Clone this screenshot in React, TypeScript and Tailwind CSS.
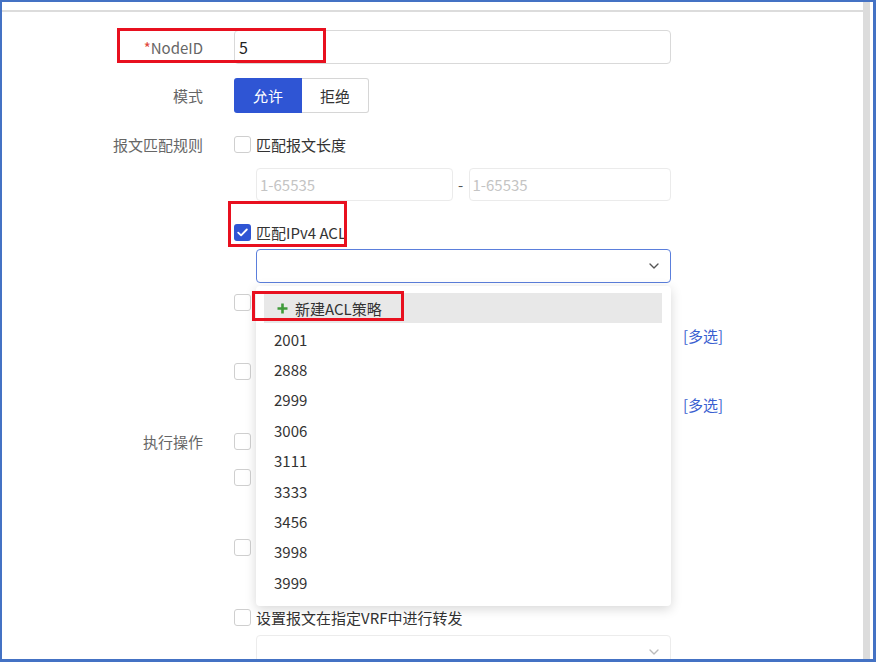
import { ChevronDown } from 'lucide-react'
import type { ReactNode } from 'react'

const aclList = ['2001', '2888', '2999', '3006', '3111', '3333', '3456', '3998', '3999']

function Checkbox({ checked = false }: { checked?: boolean }) {
  if (checked) {
    return (
      <span className="flex h-[17px] w-[17px] shrink-0 items-center justify-center rounded-[3px] bg-[#2f55d4]">
        <svg width="11" height="9" viewBox="0 0 11 9" fill="none">
          <path d="M1.2 4.6 4.1 7.4 9.8 1.5" stroke="#fff" strokeWidth="1.8" strokeLinecap="round" strokeLinejoin="round" />
        </svg>
      </span>
    )
  }
  return <span className="h-[17px] w-[17px] shrink-0 rounded-[3px] border border-[#cfcfcf] bg-white" />
}

function Row({ label, className, children }: { label?: ReactNode; className: string; children: ReactNode }) {
  return (
    <div className={'flex items-center ' + className}>
      <div className="w-[201px] shrink-0 text-right text-[#666]">{label}</div>
      <div className="ml-[31px] flex h-full w-[437px] shrink-0 items-center">{children}</div>
    </div>
  )
}

// rows that sit under the open dropdown only show their checkbox
function CheckRow({ label, text, checked, className }: { label?: string; text?: string; checked?: boolean; className: string }) {
  return (
    <Row label={label} className={'h-[24px] ' + className}>
      <Checkbox checked={checked} />
      {text && <span className="ml-[5px] whitespace-nowrap text-[#333]">{text}</span>}
    </Row>
  )
}

function SelectBox({ active, muted }: { active?: boolean; muted?: boolean }) {
  return (
    <div
      className={
        'ml-[22px] flex h-full w-[415px] shrink-0 items-center justify-end rounded-[4px] border bg-white pr-[8px] ' +
        (active ? 'border-[#5b7fdc]' : muted ? 'border-[#ececec]' : 'border-[#d9d9d9]')
      }
    >
      <ChevronDown size={16} strokeWidth={2} className={muted ? 'text-[#bbb]' : 'text-[#555]'} />
    </div>
  )
}

function AclDropdown() {
  return (
    <div className="absolute left-[22px] top-[37px] z-10 h-[320px] w-[415px] rounded-[4px] bg-white pt-[7px] shadow-[0_3px_12px_rgba(0,0,0,0.16)]">
      <div className="ml-[8px] mr-[9px] flex h-[30px] items-center bg-[#e8e8e8] pl-[13px] text-[#333]">
        <svg width="11" height="11" viewBox="0 0 11 11" className="mr-[7px]">
          <path d="M5.5 0.5v10M0.5 5.5h10" stroke="#3f9a3a" strokeWidth="2.6" />
        </svg>
        新建ACL策略
      </div>
      <ul className="mt-[1px]">
        {aclList.map((acl) => (
          <li key={acl} className="flex h-[30.4px] items-center pl-[18px] text-[#333]">
            {acl}
          </li>
        ))}
      </ul>
    </div>
  )
}

export default function App() {
  return (
    <div className="relative h-[662px] w-[876px] overflow-hidden border-b-[3px] border-l-2 border-r-[3px] border-t-2 border-[#4472c4] bg-white font-['Noto_Sans_CJK_SC',sans-serif] text-[15px] leading-none">
      <div className="flex h-full">
        <div className="min-w-0 flex-1">
          <div className="h-[8px]" />
          <div className="h-[2px] bg-[#dcdcdc]" />

          <div className="pt-[18px]">
            <Row
              className="h-[34px]"
              label={
                <>
                  <span className="text-[#e0473b]">*</span>NodeID
                </>
              }
            >
              <div className="flex h-full w-full items-center rounded-[4px] border border-[#d9d9d9] pl-[4px] text-[16px] text-[#222]">
                5
              </div>
            </Row>

            <Row label="模式" className="mt-[14px] h-[35px]">
              <button className="h-full w-[68px] rounded-l-[3px] bg-[#2f55d4] text-white">允许</button>
              <button className="h-full w-[67px] rounded-r-[3px] border border-l-0 border-[#d6d6d6] bg-white text-[#333]">拒绝</button>
            </Row>

            <CheckRow label="报文匹配规则" text="匹配报文长度" className="mt-[19px]" />

            <Row className="mt-[12px] h-[33px]">
              <div className="ml-[22px] flex h-full w-[197px] items-center rounded-[4px] border border-[#ebebeb] pl-[3px] text-[#c4c4c4]">1-65535</div>
              <span className="mx-[5px] w-[6px] text-center text-[#555]">-</span>
              <div className="flex h-full w-[203px] items-center rounded-[4px] border border-[#ebebeb] pl-[3px] text-[#c4c4c4]">1-65535</div>
            </Row>

            <CheckRow text="匹配IPv4 ACL" checked className="mt-[19px]" />

            <div className="relative">
              <Row className="mt-[5px] h-[34px]">
                <SelectBox active />
              </Row>
              <div className="absolute left-[232px] top-0 h-full">
                <AclDropdown />
              </div>
            </div>

            <CheckRow className="mt-[7px]" />
            <Row className="mt-[4px] h-[34px]">
              <SelectBox />
              <span className="ml-[12px] shrink-0 whitespace-nowrap text-[#3a5fd0]">[多选]</span>
            </Row>

            <CheckRow className="mt-[7px]" />
            <Row className="mt-[4px] h-[34px]">
              <SelectBox />
              <span className="ml-[12px] shrink-0 whitespace-nowrap text-[#3a5fd0]">[多选]</span>
            </Row>

            <CheckRow label="执行操作" className="mt-[8px]" />
            <CheckRow className="mt-[12px]" />
            <Row className="mt-[10px] h-[33px]">
              <SelectBox />
            </Row>
            <CheckRow className="mt-[3px]" />
            <Row className="mt-[10px] h-[33px]">
              <SelectBox />
            </Row>
            <CheckRow text="设置报文在指定VRF中进行转发" className="mt-[3px]" />
            <Row className="mt-[6px] h-[34px]">
              <SelectBox muted />
            </Row>
          </div>
        </div>
        {/* scrollbar track */}
        <div className="w-[7px] shrink-0 bg-[#dcdcdc]" />
        <div className="w-[3px] shrink-0" />
      </div>

      {/* red callouts */}
      <div className="pointer-events-none absolute left-[115px] top-[26px] z-20 h-[35px] w-[209px] border-[3px] border-[#e8101f]" />
      <div className="pointer-events-none absolute left-[226px] top-[199px] z-20 h-[46px] w-[119px] border-[3px] border-[#e8101f]" />
      <div className="pointer-events-none absolute left-[250px] top-[289px] z-20 h-[30px] w-[152px] border-[3px] border-[#e8101f]" />
    </div>
  )
}
